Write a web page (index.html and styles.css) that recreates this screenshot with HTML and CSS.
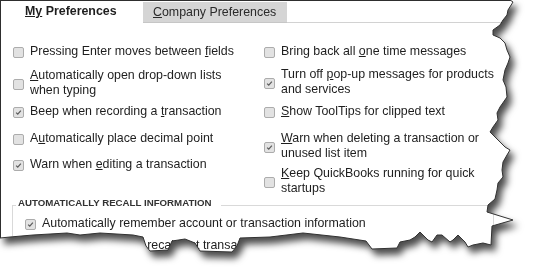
FILE: index.html
```html
<!DOCTYPE html>
<html lang="en">
<head>
<meta charset="utf-8">
<title>My Preferences</title>
<link rel="stylesheet" href="styles.css">
</head>
<body>
<div class="sheet">
  <div class="paper">
    <div class="tabs">
      <div class="tab tab-active"><u>My</u> Preferences</div>
      <div class="tab tab-idle"><u>C</u>ompany Preferences</div>
      <div class="tab-fill"></div>
    </div>
    <div class="options">
      <div class="col col-left">
        <div class="opt"><span class="cb"></span><span class="txt">Pressing Enter moves between <u>f</u>ields</span></div>
        <div class="opt"><span class="cb"></span><span class="txt"><u>A</u>utomatically open drop-down lists<br>when typing</span></div>
        <div class="opt"><span class="cb on"><svg viewBox="0 0 11 11"><path d="M2.6 5.6 L4.6 7.6 L8.4 3.2"/></svg></span><span class="txt">Beep when recording a <u>t</u>ransaction</span></div>
        <div class="opt"><span class="cb"></span><span class="txt">A<u>u</u>tomatically place decimal point</span></div>
        <div class="opt"><span class="cb on"><svg viewBox="0 0 11 11"><path d="M2.6 5.6 L4.6 7.6 L8.4 3.2"/></svg></span><span class="txt">Warn when <u>e</u>diting a transaction</span></div>
      </div>
      <div class="col col-right">
        <div class="opt"><span class="cb"></span><span class="txt">Bring back all <u>o</u>ne time messages</span></div>
        <div class="opt"><span class="cb on"><svg viewBox="0 0 11 11"><path d="M2.6 5.6 L4.6 7.6 L8.4 3.2"/></svg></span><span class="txt">Turn off <u>p</u>op-up messages for products<br>and services</span></div>
        <div class="opt"><span class="cb"></span><span class="txt"><u>S</u>how ToolTips for clipped text</span></div>
        <div class="opt"><span class="cb on"><svg viewBox="0 0 11 11"><path d="M2.6 5.6 L4.6 7.6 L8.4 3.2"/></svg></span><span class="txt"><u>W</u>arn when deleting a transaction or<br>unused list item</span></div>
        <div class="opt"><span class="cb"></span><span class="txt"><u>K</u>eep QuickBooks running for quick<br>startups</span></div>
      </div>
    </div>
    <fieldset class="group">
      <legend>AUTOMATICALLY RECALL INFORMATION</legend>
      <div class="opt"><span class="cb on"><svg viewBox="0 0 11 11"><path d="M2.6 5.6 L4.6 7.6 L8.4 3.2"/></svg></span><span class="txt">Automatically remember account or transaction information</span></div>
      <div class="opt opt-radio"><span class="rb"></span><span class="txt">Automatically recall last transaction for this name</span></div>
    </fieldset>
  </div>
  <svg class="tear" viewBox="0 0 515 256" width="515" height="256">
    <polyline points="510,0 513,2 508,10 507,15 503,20 500,25 493,30 493,35 500,38 505,43 507,50 510,57 508,63 505,70 503,80 506,87 507,97 500,107 497,113 498,120 493,127 490,132 495,137 500,142 505,147 510,150 507,155 503,162 502,170 503,177 498,183 497,190 495,199 488,205 487,212 513,220 492,226 491,245 483,243 473,245 468,247 465,242 458,235 453,240 450,242 442,235 437,235 432,242 428,240 420,232 415,237 410,240 400,242 397,248 372,249 366,241 340,237 303,233 270,237 240,238 237,246 232,252 200,251 195,243 185,239 172,241 168,250 150,251 146,246 143,237 133,235 100,233 80,235 67,233 33,235 10,237 0,238"/>
  </svg>
</div>
</body>
</html>
```

FILE: styles.css
```css
* { box-sizing: border-box; }

html, body {
  margin: 0;
  padding: 0;
  background: #ffffff;
}

body {
  width: 537px;
  height: 276px;
  overflow: hidden;
  font-family: "Liberation Sans", Arial, sans-serif;
  font-size: 12.4px;
  line-height: 15px;
  color: #1e1e1e;
}

u { text-decoration: underline; text-underline-offset: 1px; }

.sheet {
  position: relative;
  width: 537px;
  height: 276px;
  filter: drop-shadow(4px 6px 3.5px rgba(0, 0, 0, 0.7));
}

.paper {
  width: 515px;
  height: 256px;
  overflow: hidden;
  background: #ffffff;
  border-top: 1px solid #2e2e2e;
  border-left: 1px solid #2e2e2e;
  clip-path: polygon(0 0, 510px 0, 513px 2px, 508px 10px, 507px 15px, 503px 20px, 500px 25px, 493px 30px, 493px 35px, 500px 38px, 505px 43px, 507px 50px, 510px 57px, 508px 63px, 505px 70px, 503px 80px, 506px 87px, 507px 97px, 500px 107px, 497px 113px, 498px 120px, 493px 127px, 490px 132px, 495px 137px, 500px 142px, 505px 147px, 510px 150px, 507px 155px, 503px 162px, 502px 170px, 503px 177px, 498px 183px, 497px 190px, 495px 199px, 488px 205px, 487px 212px, 513px 220px, 492px 226px, 491px 245px, 483px 243px, 473px 245px, 468px 247px, 465px 242px, 458px 235px, 453px 240px, 450px 242px, 442px 235px, 437px 235px, 432px 242px, 428px 240px, 420px 232px, 415px 237px, 410px 240px, 400px 242px, 397px 248px, 372px 249px, 366px 241px, 340px 237px, 303px 233px, 270px 237px, 240px 238px, 237px 246px, 232px 252px, 200px 251px, 195px 243px, 185px 239px, 172px 241px, 168px 250px, 150px 251px, 146px 246px, 143px 237px, 133px 235px, 100px 233px, 80px 235px, 67px 233px, 33px 235px, 10px 237px, 0 238px);
}

.tear {
  position: absolute;
  left: 0;
  top: 0;
  overflow: visible;
  pointer-events: none;
}

.tear polyline {
  fill: none;
  stroke: #333333;
  stroke-width: 1;
}

/* tabs */
.tabs {
  display: flex;
  align-items: flex-end;
  height: 22px;
}

.tab {
  white-space: nowrap;
  line-height: 20px;
}

.tab-active {
  width: 142px;
  height: 22px;
  padding-left: 24px;
  font-weight: bold;
  color: #1e1e1e;
}

.tab-idle {
  width: 144px;
  height: 21px;
  padding-left: 10px;
  background: #d5d5d5;
  border-bottom: 1px solid #c6c6c6;
  color: #2a2a2a;
}

.tab-fill {
  flex: 1;
  height: 22px;
  border-bottom: 1px solid #d2d2d2;
}

/* options */
.options {
  display: grid;
  grid-template-columns: 251px 1fr;
  padding: 21px 0 0 12px;
}

.col {
  display: flex;
  flex-direction: column;
}

.opt {
  display: flex;
  align-items: center;
  gap: 6px;
  white-space: nowrap;
}

.col-left .opt:nth-child(2) { margin-top: 9px; }
.col-left .opt:nth-child(3) { margin-top: 6px; }
.col-left .opt:nth-child(4) { margin-top: 12px; }
.col-left .opt:nth-child(5) { margin-top: 11px; }

.col-right .opt:nth-child(2) { margin-top: 8px; }
.col-right .opt:nth-child(3) { margin-top: 7px; }
.col-right .opt:nth-child(4) { margin-top: 12px; }
.col-right .opt:nth-child(5) { margin-top: 5px; }

.cb {
  flex: none;
  width: 11px;
  height: 11px;
  margin-top: 2px;
  border: 1px solid #acacac;
  border-radius: 2px;
  background: #e2e2e2;
  display: flex;
}

.cb svg {
  width: 9px;
  height: 9px;
}

.cb svg path {
  fill: none;
  stroke: #5c5c5c;
  stroke-width: 1.5;
}

.rb {
  flex: none;
  width: 11px;
  height: 11px;
  margin-top: 2px;
  border: 1px solid #acacac;
  border-radius: 50%;
  background: #e2e2e2;
}

/* group box */
.group {
  margin: 1px 0 0 11px;
  width: 482px;
  padding: 3px 0 0 12px;
  border: 1px solid #d9d9d9;
  min-height: 60px;
}

.group legend {
  margin-left: -9px;
  padding: 0 9px 4px 2px;
  font-size: 9.7px;
  line-height: 12px;
  font-weight: bold;
  color: #333333;
}

.opt-radio {
  margin: 7px 0 0 30px;
  gap: 4px;
}
```
